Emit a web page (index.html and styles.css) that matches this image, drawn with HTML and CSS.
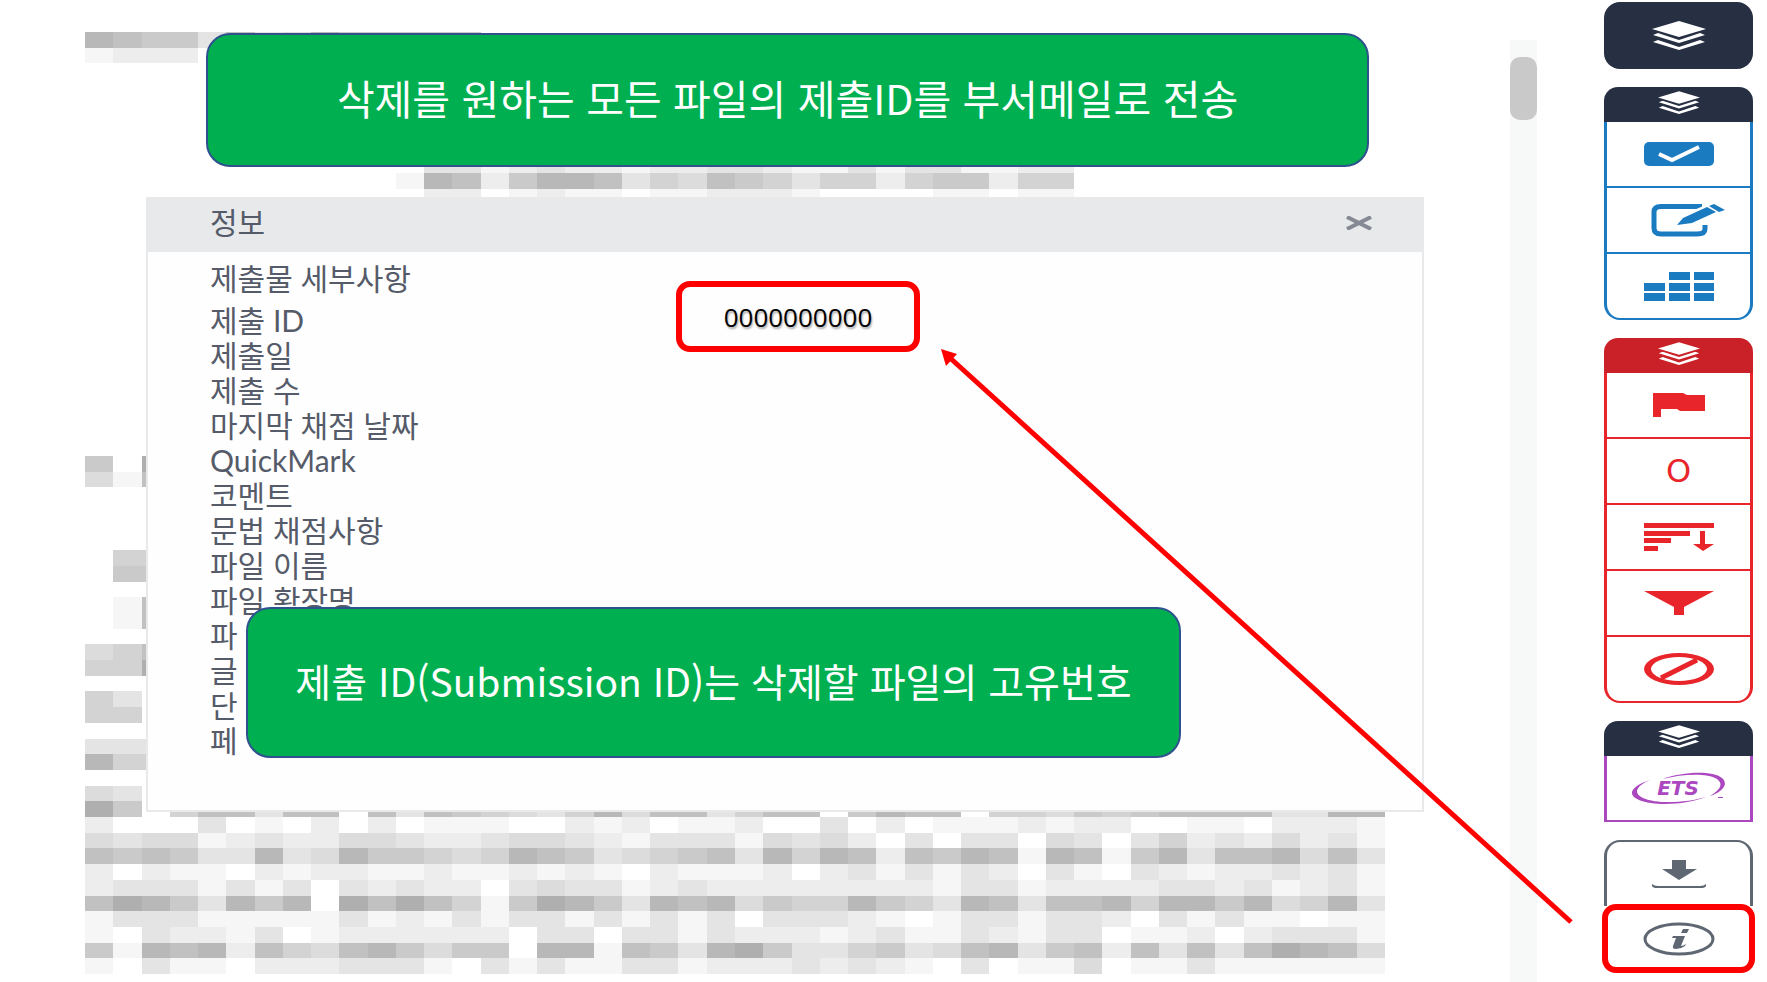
FILE: index.html
```html
<!DOCTYPE html>
<html lang="ko">
<head>
<meta charset="utf-8">
<meta name="viewport" content="width=device-width, initial-scale=1">
<title>제출물 정보</title>
<link rel="stylesheet" href="styles.css">
</head>
<body>
<svg class="defs" aria-hidden="true">
  <symbol id="layers" viewBox="0 0 54 30">
    <path d="M27 0 54 8 27 16 0 8zM1 14 6 12 27 19 48 12 53 14 27 22zM1 21 6 19 27 26 48 19 53 21 27 29z"/>
  </symbol>
</svg>
<div class="page">
  <main class="document">
    <svg class="mosaic" viewBox="0 0 46 60" preserveAspectRatio="none" aria-hidden="true"></svg>

    <section class="dialog" aria-labelledby="dialog-title">
      <header class="dialog-header">
        <h1 class="dialog-title" id="dialog-title">정보</h1>
        <button class="close" type="button" aria-label="닫기">
          <svg viewBox="0 0 28 14"><path d="M2 1 26 13M26 1 2 13"/></svg>
        </button>
      </header>
      <div class="dialog-body">
        <h2 class="section-title">제출물 세부사항</h2>
        <ul class="fields">
          <li>제출 ID</li>
          <li>제출일</li>
          <li>제출 수</li>
          <li>마지막 채점 날짜</li>
          <li>QuickMark</li>
          <li>코멘트</li>
          <li>문법 채점사항</li>
          <li>파일 이름</li>
          <li>파일 확장명</li>
          <li>파</li>
          <li>글</li>
          <li>단</li>
          <li>페</li>
        </ul>
      </div>
      <output class="submission-id">0000000000</output>
    </section>

    <p class="callout callout-top">삭제를 원하는 모든 파일의 제출ID를 부서메일로 전송</p>
    <p class="callout callout-bottom">제출 ID(Submission ID)는 삭제할 파일의 고유번호</p>
  </main>

  <div class="scrollbar"><div class="thumb"></div></div>

  <nav class="rail" aria-label="도구">
    <button class="all-layers" type="button" aria-label="모든 레이어"><svg class="layers-large"><use href="#layers"/></svg></button>

    <div class="group blue">
      <button class="group-header" type="button" aria-label="채점 레이어"><svg class="layers-small"><use href="#layers"/></svg></button>
      <button class="tool" type="button" aria-label="QuickMark">
        <svg class="icon" viewBox="0 0 90 34"><rect x="10" y="5" width="70" height="24" rx="5"/><path class="knockout" d="M25 17 38 23 65 10"/></svg>
      </button>
      <button class="tool" type="button" aria-label="피드백">
        <svg class="icon" viewBox="0 0 90 34"><path class="line" d="M68 3.500H27Q20 3.500 20 9V25Q20 31 27 31H63Q71 31 71 26V22"/><path class="gap" d="M38 25 46 13 74 1 94 3 86 12 60 22z"/><path d="M43 22 49 15 73 4 82 9 58 20zM75 3 80 1 91 7 85 9z"/></svg>
      </button>
      <button class="tool" type="button" aria-label="루브릭">
        <svg class="icon" viewBox="0 0 90 34"><path d="M35 3h21v8H35zM60 3h20v8H60zM10 14h21v8H10zM35 14h21v8H35zM60 14h20v8H60zM10 24h21v8H10zM35 24h21v8H35zM60 24h20v8H60z"/></svg>
      </button>
    </div>

    <div class="group red">
      <button class="group-header" type="button" aria-label="유사도 레이어"><svg class="layers-small"><use href="#layers"/></svg></button>
      <button class="tool" type="button" aria-label="플래그">
        <svg class="icon" viewBox="0 0 90 34"><path d="M19 5H49L53 7H71V23H46L43 21H27V29H19z"/></svg>
      </button>
      <button class="tool score" type="button">O</button>
      <button class="tool" type="button" aria-label="모든 소스">
        <svg class="icon" viewBox="0 0 90 34"><path d="M10 3H80V8H10zM10 11H56V16H10zM10 18H37V23H10zM10 26H24V31H10zM66 11H71V24H80L69 31 59 24H66z"/></svg>
      </button>
      <button class="tool" type="button" aria-label="필터">
        <svg class="icon" viewBox="0 0 90 34"><path d="M10 5H80L50 21V29H40V21z"/></svg>
      </button>
      <button class="tool" type="button" aria-label="제외된 소스">
        <svg class="icon" viewBox="0 0 90 34"><path fill-rule="evenodd" d="M10 17a35 16 0 1 0 70 0a35 16 0 1 0-70 0M17 17a28 12 0 1 1 56 0a28 12 0 1 1-56 0"/><path class="line" d="M27 26 63 8"/></svg>
      </button>
    </div>

    <div class="group purple">
      <button class="group-header" type="button" aria-label="문법 레이어"><svg class="layers-small"><use href="#layers"/></svg></button>
      <button class="tool" type="button" aria-label="ETS">
        <svg class="icon" viewBox="0 0 90 34">
          <path d="M16 9C-2 15-8 23 5 29C22 36 55 33 72 26C55 31 25 34 9 27C-1 22 2 15 16 9zM29 8C47 1 78-1 88 7C96 14 86 22 76 25C86 19 90 13 83 8C73 2 49 3 29 8z"/>
          <text class="ets" x="44" y="24" text-anchor="middle">ETS</text>
          <path d="M84 26h5v1h-5z"/>
        </svg>
      </button>
    </div>

    <div class="group grey">
      <button class="tool download" type="button" aria-label="다운로드">
        <svg class="icon" viewBox="0 0 90 34"><path d="M38 3H52V12H63L45 23 28 12H38zM18 27Q20 29 24 29H66Q70 29 72 27V29Q71 31 67 31H23Q19 31 18 29z"/></svg>
      </button>
      <button class="tool info" type="button" aria-label="정보">
        <svg class="icon" viewBox="0 0 90 34"><ellipse class="ring" cx="45" cy="17" rx="34" ry="15"/><path d="M49 7h6l-2 4h-6zM39 14h12l-4 10q2 0 5-2l-1 2q-4 3-9 3q-4 0-3-3l3-8h-4z"/></svg>
      </button>
    </div>
  </nav>

  <svg class="arrow" viewBox="0 0 1767 982" preserveAspectRatio="none" aria-hidden="true">
    <path class="shaft" d="M1571 922 949 357"/>
    <path class="head" d="M941 349 957 354 946 366z"/>
  </svg>
</div>
<script src="mosaic.js"></script>
</body>
</html>
```
FILE: styles.css
```css
* { box-sizing: border-box; }

body {
  margin: 0;
  background: #fff;
  color: #555b69;
  font-family: Lato, "Noto Sans CJK KR", sans-serif;
}

h1, h2, p, ul { margin: 0; padding: 0; font-weight: 400; }

button {
  border: 0;
  padding: 0;
  background: none;
  color: inherit;
  font: inherit;
}

.defs { display: none; }

.page {
  position: relative;
  display: grid;
  grid-template-columns: 1fr 27px 230px;
  min-height: 100vh;
  overflow: hidden;
}

.document {
  position: relative;
  padding: 197px 86px 170px 146px;
}

.mosaic {
  position: absolute;
  top: 32px;
  left: 85px;
  width: calc(100% - 210px);
  height: 942px;
  shape-rendering: crispEdges;
}

/* Information dialog */
.dialog {
  position: relative;
  height: 100%;
  border: 2px solid #e8e9eb;
  background: #fefefe;
}

.dialog-header {
  display: flex;
  align-items: center;
  justify-content: space-between;
  height: 53px;
  padding: 0 49px 6px 62px;
  background: #e8e9eb;
}

.dialog-title, .section-title, .fields { font-size: 30px; line-height: 35px; }

.close { display: flex; }
.close svg { width: 28px; height: 14px; fill: none; stroke: #858994; stroke-width: 4; }

.dialog-body { padding: 9px 62px; }
.section-title { margin-bottom: 7px; }
.fields { list-style: none; }

.submission-id {
  position: absolute;
  top: 82px;
  left: 528px;
  display: flex;
  align-items: center;
  justify-content: center;
  width: 244px;
  height: 71px;
  border: 6px solid #f00;
  border-radius: 14px;
  color: #000;
  font-family: "Open Sans", sans-serif;
  font-size: 26px;
  text-shadow: 1px 2px 2px #aaa;
}

/* Slide notes */
.callout {
  position: absolute;
  display: flex;
  align-items: center;
  justify-content: center;
  padding-bottom: 6px;
  border: 2px solid #2f528f;
  border-radius: 24px;
  background: #00b050;
  color: #fff;
  font-family: "Noto Sans CJK KR", sans-serif;
  white-space: nowrap;
}

.callout-top { top: 33px; left: 206px; right: 141px; height: 134px; font-size: 41px; }
.callout-bottom { top: 607px; left: 246px; right: 329px; height: 151px; font-size: 39px; }

.scrollbar {
  margin-top: 40px;
  padding-top: 17px;
  background: #f7f8f8;
}

.thumb { height: 63px; border-radius: 10px; background: #c9c9c9; }

/* Tool rail */
.rail {
  display: flex;
  flex-direction: column;
  gap: 18px;
  padding: 2px 14px 8px 67px;
}

.all-layers, .group-header {
  display: flex;
  align-items: center;
  justify-content: center;
  background: #272f43;
  color: #fff;
}

.all-layers { height: 67px; border-radius: 16px; }
.group-header { width: 100%; height: 35px; padding-bottom: 4px; border-radius: 14px 14px 0 0; }

.layers-large { width: 54px; height: 30px; fill: #fff; }
.layers-small { width: 42px; height: 24px; fill: #fff; }

.tool {
  display: flex;
  align-items: center;
  justify-content: center;
  width: 100%;
  height: 66px;
  border: solid currentColor;
  border-width: 0 3px 2px;
}

.blue .tool:last-child, .red .tool:last-child { border-radius: 0 0 16px 16px; }

.blue { color: #1b7bc1; }
.red { color: #e8252b; }
.red .group-header { background: #c92127; }
.purple { color: #ab47bf; }
.grey { color: #5f6773; }

.icon { width: 90px; height: 34px; fill: currentColor; overflow: visible; }
.line { fill: none; stroke: currentColor; stroke-width: 5; }
.knockout { fill: none; stroke: #fff; stroke-width: 4; }
.gap { fill: #fff; }
.ring { fill: none; stroke: currentColor; stroke-width: 3; }
.ets { font: italic 700 20px "DejaVu Sans", sans-serif; }

.score { font-family: "DejaVu Sans", sans-serif; font-size: 32px; }

.download {
  border-width: 2px 3px 0;
  border-radius: 16px 16px 0 0;
}

.info {
  width: calc(100% + 4px);
  height: 69px;
  margin: -2px -2px 0;
  border: 6px solid #f00;
  border-radius: 14px;
}

/* Pointer from the info button to the submission number */
.arrow {
  position: absolute;
  inset: 0;
  width: 100%;
  height: 100%;
  pointer-events: none;
}

.shaft { stroke: #f00; stroke-width: 5; }
.head { fill: #f00; }
```
FILE: mosaic.js
```js
// Pixelated document text: one digit per cell, 0 is the darkest grey, 9 is white.
const rows = {
  0: "12336265133333",
  1: "8777",
  8: "............66876778776678868668877",
  9: "...........812731126452346447433744",
  10: "............77987889887778999988988",
  27: "3.0",
  28: "582",
  33: ".44",
  34: ".33",
  36: ".82",
  37: ".82",
  39: "542",
  40: "440",
  42: "46",
  43: "44",
  45: "666",
  46: "144",
  48: "56",
  49: "0394226229262345641522642293122944534322226611",
  50: "7999698979798889978798879969798887877998897778",
  51: "5655876775567765567866685657969669569647675768",
  52: "2323661651334541236543261412723128128316221526",
  53: "7978897877887887878978887976868679689678776768",
  54: "7666868696767796566876777777778668777766768768",
  55: "2013613190202483013612153441346126221411315416",
  56: "8666888886878686686868696667898668667968688988",
  57: "8967786987777779669668677787688678669887976668",
  58: "3812172452135339118236103664365216327262620125",
  59: "8968897776668968688668777676789698859886888888"
};

const svg = document.querySelector(".mosaic");
for (const [y, cells] of Object.entries(rows)) {
  [...cells].forEach((cell, x) => {
    if (cell === ".") return;
    const grey = Math.round(175 + cell * 8.9);
    const rect = document.createElementNS("http://www.w3.org/2000/svg", "rect");
    rect.setAttribute("x", x);
    rect.setAttribute("y", y);
    rect.setAttribute("width", 1);
    rect.setAttribute("height", 1);
    rect.setAttribute("fill", `rgb(${grey},${grey},${grey})`);
    svg.append(rect);
  });
}
```
